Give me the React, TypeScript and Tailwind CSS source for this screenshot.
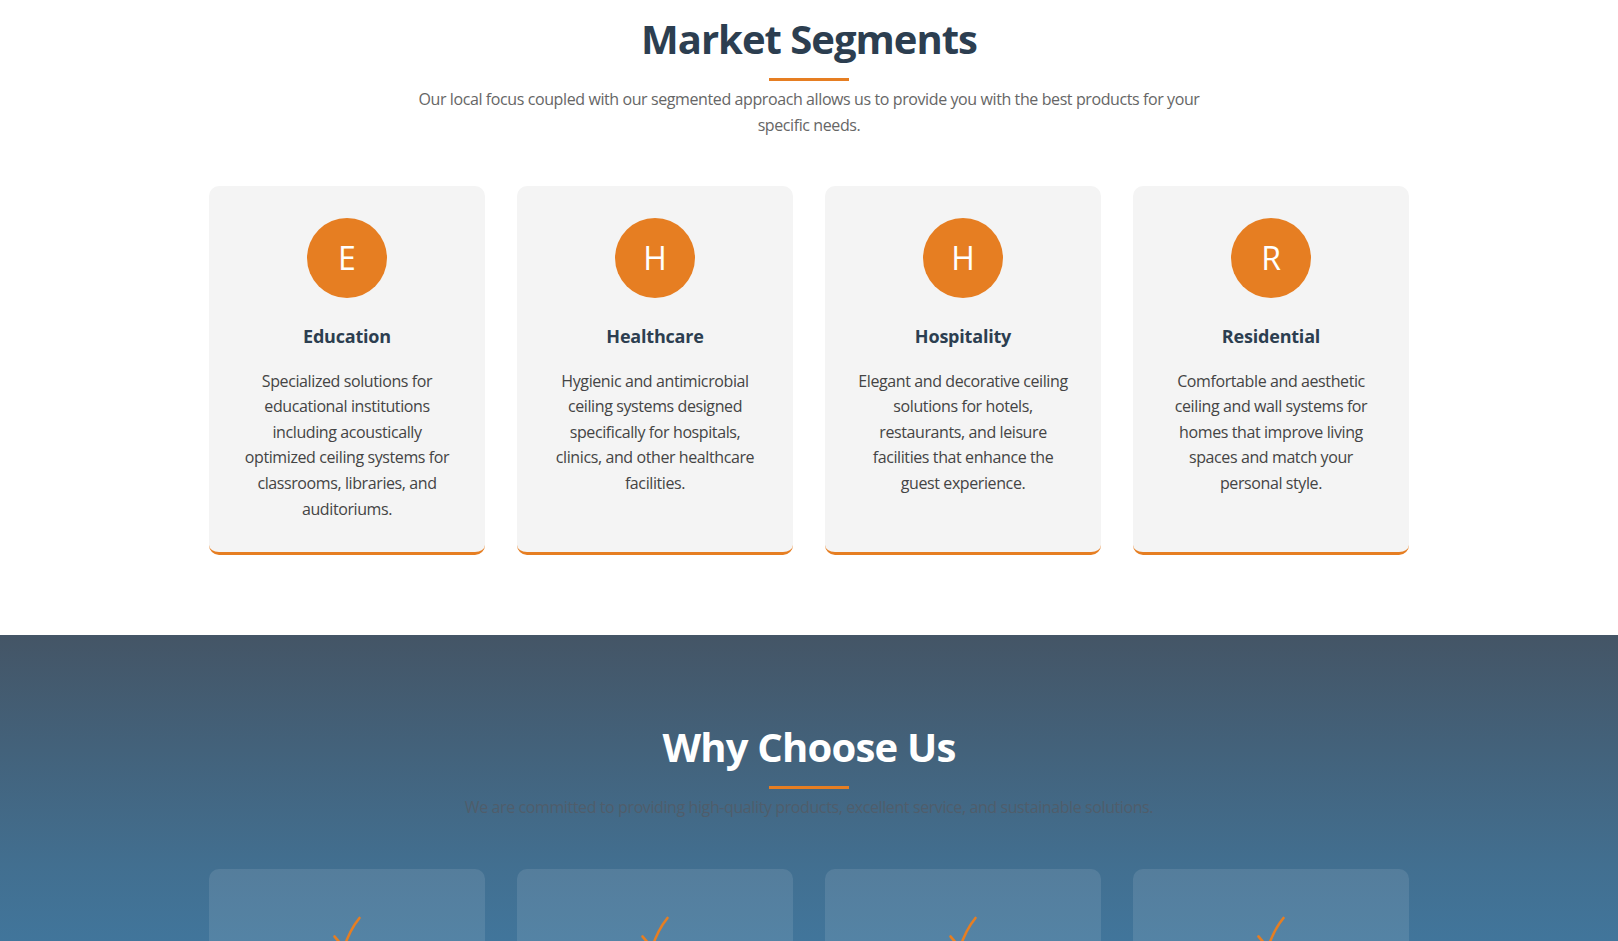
const segments = [
  {
    letter: "E",
    title: "Education",
    text: "Specialized solutions for educational institutions including acoustically optimized ceiling systems for classrooms, libraries, and auditoriums.",
  },
  {
    letter: "H",
    title: "Healthcare",
    text: "Hygienic and antimicrobial ceiling systems designed specifically for hospitals, clinics, and other healthcare facilities.",
  },
  {
    letter: "H",
    title: "Hospitality",
    text: "Elegant and decorative ceiling solutions for hotels, restaurants, and leisure facilities that enhance the guest experience.",
  },
  {
    letter: "R",
    title: "Residential",
    text: "Comfortable and aesthetic ceiling and wall systems for homes that improve living spaces and match your personal style.",
  },
];

const SectionHeader = ({
  title,
  subtitle,
  light,
}: {
  title: string;
  subtitle: string;
  light?: boolean;
}) => (
  <div className="flex flex-col items-center text-center">
    <h2
      className={
        light
          ? "text-[40px] font-bold leading-[1.2] tracking-[-0.8px] text-white"
          : "text-[40px] font-bold leading-[1.2] tracking-[-1px] text-[#2c3e50]"
      }
    >
      {title}
    </h2>
    <div className="mt-[15px] h-[3px] w-20 bg-[#e67e22]" />
    <p
      className={
        light
          ? "mt-[6px] max-w-[800px] text-[16px] leading-[1.6] tracking-[-0.4px] text-[#4f5d6b]"
          : "mt-[6px] max-w-[800px] text-[16px] leading-[1.6] tracking-[-0.4px] text-[#666]"
      }
    >
      {subtitle}
    </p>
  </div>
);

const CheckMark = () => (
  <svg width="30" height="36" viewBox="0 0 30 36" fill="none">
    <path
      d="M2.5 20.5 C6 24 9 28 11.5 33 C15 22 20 11 27.5 2"
      stroke="#e67e22"
      strokeWidth="2.6"
      strokeLinecap="round"
      strokeLinejoin="round"
    />
  </svg>
);

export default function App() {
  return (
    <div className="min-h-screen bg-white font-['Open_Sans',sans-serif]">
      <section className="bg-white pt-[15px] pb-20">
        <div className="mx-auto max-w-[1200px]">
          <SectionHeader
            title="Market Segments"
            subtitle="Our local focus coupled with our segmented approach allows us to provide you with the best products for your specific needs."
          />
          <div className="mt-12 grid grid-cols-4 gap-8">
            {segments.map((s) => (
              <div
                key={s.title}
                className="flex flex-col items-center rounded-[10px] border-b-[3px] border-[#e67e22] bg-[#f4f4f4] px-[30px] pt-8 pb-[30px] text-center"
              >
                <div className="flex h-20 w-20 items-center justify-center rounded-full bg-[#e67e22] text-[32px] text-white">
                  {s.letter}
                </div>
                <h3 className="mt-[27px] text-[18px] font-bold leading-[1.3] tracking-[-0.2px] text-[#2c3e50]">
                  {s.title}
                </h3>
                <p className="mt-5 text-[16px] leading-[1.6] tracking-[-0.4px] text-[#444]">
                  {s.text}
                </p>
              </div>
            ))}
          </div>
        </div>
      </section>

      <section className="bg-[linear-gradient(180deg,#445566_0px,#426f90_230px,#3e8ec6_600px)] pt-[88px] pb-20">
        <div className="mx-auto max-w-[1200px]">
          <SectionHeader
            light
            title="Why Choose Us"
            subtitle="We are committed to providing high-quality products, excellent service, and sustainable solutions."
          />
          <div className="mt-12 grid grid-cols-4 gap-8">
            {[0, 1, 2, 3].map((i) => (
              <div
                key={i}
                className="flex min-h-[300px] flex-col items-center rounded-[10px] bg-white/10 px-8 pt-[47px] pb-8"
              >
                <CheckMark />
              </div>
            ))}
          </div>
        </div>
      </section>
    </div>
  );
}
